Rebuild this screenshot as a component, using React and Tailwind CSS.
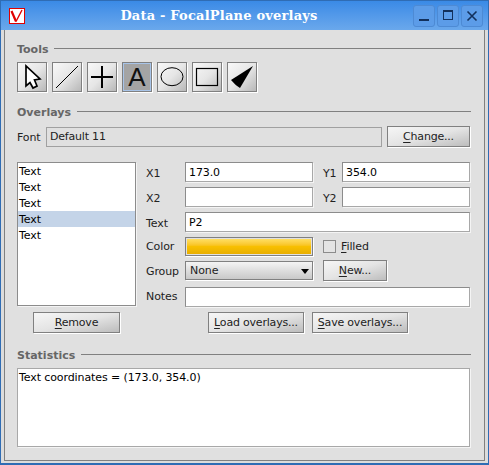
import React from "react";

const font = { fontFamily: '"DejaVu Sans", sans-serif' };

// Group heading with the rule running to the right
function Section({ title }) {
    return (
        <div className="flex items-center h-[14px] pr-[13px]">
            <span className="text-[11px] font-bold text-[#666666] leading-none mr-[6px]">
                {title}
            </span>
            <div className="flex-1 h-[1px] bg-[#808080] -translate-y-[1px]"></div>
        </div>
    );
}

function Button({ className, children }) {
    return (
        <div
            className={`flex items-center justify-center pt-[2px] border border-[#808080] bg-linear-to-br from-[#f6f6f6] via-[#e4e4e4] to-[#bdbdbd] shadow-[1px_1px_0_#ffffff] text-[11px] tracking-[-0.2px] text-[#222222] ${className}`}
        >
            {children}
        </div>
    );
}

function Field({ className, value }) {
    return (
        <div
            className={`flex items-center h-[20px] pl-[3px] pt-[2px] bg-white border border-[#8c8c8c] border-b-[#a8a8a8] border-r-[#a8a8a8] shadow-[1px_1px_0_#f4f4f4] text-[11px] tracking-[-0.1px] text-black ${className}`}
        >
            {value}
        </div>
    );
}

function Label({ className, children }) {
    return (
        <span
            className={`text-[11px] tracking-[-0.1px] text-[#222222] leading-none ${className}`}
        >
            {children}
        </span>
    );
}

function Tool({ active, children }) {
    return (
        <div
            className={`flex items-center justify-center w-[30px] h-[30px] border border-[#808080] shadow-[1px_1px_0_#ffffff] ${
                active
                    ? "bg-[#a4a4a4] outline outline-1 -outline-offset-2 outline-[#a8c4e8]"
                    : "bg-linear-to-br from-[#f8f8f8] via-[#e6e6e6] to-[#b8b8b8]"
            }`}
        >
            {children}
        </div>
    );
}

const tools = [
    <svg width="26" height="26" viewBox="0 0 26 26">
        <path
            d="M7 2 L7 22 L11 18.5 L14 24 L18 22 L15.5 16 L21 15 Z"
            fill="white"
            stroke="black"
            strokeWidth="1.7"
        />
    </svg>,
    <svg width="26" height="26" viewBox="0 0 26 26">
        <path d="M2 24 L24 2" stroke="black" strokeWidth="1" />
    </svg>,
    <svg width="26" height="26" viewBox="0 0 26 26">
        <path d="M2 13 H24 M13 2 V24" stroke="black" strokeWidth="2" />
    </svg>,
    <span
        className="text-[26px] leading-none text-[#111111]"
        style={{ fontFamily: '"Liberation Sans", sans-serif' }}
    >
        A
    </span>,
    <svg width="26" height="26" viewBox="0 0 26 26">
        <ellipse cx="13" cy="12.7" rx="11" ry="9" fill="none" stroke="black" />
    </svg>,
    <svg width="26" height="26" viewBox="0 0 26 26">
        <rect x="2.5" y="4.5" width="21" height="17" fill="none" stroke="black" strokeWidth="1.2" />
    </svg>,
    <svg width="26" height="26" viewBox="0 0 26 26">
        <path d="M24 2 L2 16 Q6 21 11 24 Z" fill="black" />
    </svg>,
];

const items = ["Text", "Text", "Text", "Text", "Text"];

export default function App() {
    return (
        <div
            className="w-[489px] h-[465px] flex flex-col overflow-hidden bg-[#2f6cb4] px-[1px] pb-[2px] pt-[1px]"
            style={font}
        >
            {/* Title bar */}
            <div className="flex items-center h-[29px] shrink-0 bg-linear-to-b from-[#3a8ae6] to-[#6aa8ec] pl-[8px] pr-[5px]">
                <div className="flex items-center justify-center w-[16px] h-[16px] bg-white border border-[#e00000]">
                    <svg width="14" height="14" viewBox="0 0 14 14">
                        <path d="M1.5 2 L6 12.5" fill="none" stroke="#e00000" strokeWidth="2.2" />
                        <path d="M6 12.5 L12 1" fill="none" stroke="#e00000" strokeWidth="1.4" />
                    </svg>
                </div>
                <div
                    className="flex-1 text-center text-white font-bold text-[13px] tracking-[0.2px]"
                    style={{ fontFamily: '"DejaVu Serif", serif' }}
                >
                    Data - FocalPlane overlays
                </div>
                <div className="flex gap-[2px]">
                    <div className="flex items-center justify-center w-[22px] h-[22px] rounded-[3px] border border-[#4d8ad4] bg-[#5c9ce8]">
                        <div className="w-[10px] h-[2px] bg-[#12305c] translate-y-[4px]"></div>
                    </div>
                    <div className="flex items-center justify-center w-[22px] h-[22px] rounded-[3px] border border-[#4d8ad4] bg-[#5c9ce8]">
                        <div className="w-[10px] h-[10px] border border-[#12305c] border-t-2 -translate-y-[1px]"></div>
                    </div>
                    <div className="flex items-center justify-center w-[22px] h-[22px] rounded-[3px] border border-[#4d8ad4] bg-[#5c9ce8]">
                        <svg width="12" height="12" viewBox="0 0 12 12">
                            <path
                                d="M1.5 1.5 L10.5 10.5 M10.5 1.5 L1.5 10.5"
                                stroke="#12305c"
                                strokeWidth="1.6"
                            />
                        </svg>
                    </div>
                </div>
            </div>

            {/* Window frame */}
            <div className="flex-1 bg-[#dcdcdc] px-[3px] pb-[2px]">
                <div className="h-full bg-[#e0e0e0] border border-t-0 border-[#808080] pl-[12px] pt-[12px]">
                    <Section title="Tools" />

                    <div className="flex gap-[5px] mt-[6px]">
                        {tools.map((icon, index) => (
                            <Tool key={index} active={index === 3}>
                                {icon}
                            </Tool>
                        ))}
                    </div>

                    <div className="mt-[13px]">
                        <Section title="Overlays" />
                    </div>

                    {/* Font row */}
                    <div className="flex items-center mt-[7px]">
                        <Label className="w-[29px] pt-[2px]">Font</Label>
                        <div className="flex items-center w-[336px] h-[20px] pl-[3px] pt-[2px] border border-[#a0a0a0] text-[11px] tracking-[-0.2px] text-[#222222]">
                            Default 11
                        </div>
                        <Button className="w-[83px] h-[21px] ml-[5px]">
                            <span>
                                <u className="underline-offset-2">C</u>hange...
                            </span>
                        </Button>
                    </div>

                    {/* List and form */}
                    <div className="flex mt-[15px]">
                        <div className="flex flex-col w-[119px] shrink-0">
                            <div className="h-[144px] bg-white border border-[#8c8c8c] shadow-[1px_1px_0_#f4f4f4]">
                                {items.map((item, index) => (
                                    <div
                                        key={index}
                                        className={`flex items-center h-[16px] pl-[1px] pt-[2px] text-[11px] tracking-[-0.1px] text-black ${
                                            index === 3 ? "bg-[#c4d4e8]" : ""
                                        }`}
                                    >
                                        {item}
                                    </div>
                                ))}
                            </div>
                            <Button className="w-[87px] h-[21px] ml-[16px] mt-[6px]">
                                <span>
                                    <u className="underline-offset-2">R</u>emove
                                </span>
                            </Button>
                        </div>

                        <div className="flex flex-col ml-[10px] w-[324px]">
                            <div className="flex items-center">
                                <Label className="w-[39px] pt-[2px]">X1</Label>
                                <Field className="w-[128px]" value="173.0" />
                                <Label className="w-[19px] ml-[10px] pt-[2px]">Y1</Label>
                                <Field className="w-[128px]" value="354.0" />
                            </div>
                            <div className="flex items-center mt-[5px]">
                                <Label className="w-[39px] pt-[2px]">X2</Label>
                                <Field className="w-[128px]" value="" />
                                <Label className="w-[19px] ml-[10px] pt-[2px]">Y2</Label>
                                <Field className="w-[128px]" value="" />
                            </div>
                            <div className="flex items-center mt-[5px]">
                                <Label className="w-[39px] pt-[2px]">Text</Label>
                                <Field className="w-[285px]" value="P2" />
                            </div>
                            <div className="flex items-center mt-[5px]">
                                <Label className="w-[39px]">Color</Label>
                                <div className="w-[128px] h-[19px] border border-[#808080] p-[1px] shadow-[1px_1px_0_#ffffff]">
                                    <div className="h-full bg-linear-to-b from-[#ffdf60] via-[#f8c000] to-[#e8ae00]"></div>
                                </div>
                                <div className="w-[13px] h-[13px] ml-[10px] border border-[#8c8c8c] bg-[#e4e4e4]"></div>
                                <Label className="ml-[5px]">
                                    <u className="underline-offset-2">F</u>illed
                                </Label>
                            </div>
                            <div className="flex items-center mt-[4px]">
                                <Label className="w-[39px] pt-[2px]">Group</Label>
                                <div className="flex items-center justify-between w-[128px] h-[19px] pl-[4px] pr-[3px] pt-[2px] border border-[#808080] bg-linear-to-b from-[#f4f4f4] to-[#c8c8c8] shadow-[1px_1px_0_#ffffff] text-[11px] tracking-[-0.1px] text-[#222222]">
                                    None
                                    <svg width="8" height="5" viewBox="0 0 8 5">
                                        <path d="M0 0 H8 L4 5 Z" fill="black" />
                                    </svg>
                                </div>
                                <Button className="w-[64px] h-[21px] ml-[10px]">
                                    <span>
                                        <u className="underline-offset-2">N</u>ew...
                                    </span>
                                </Button>
                            </div>
                            <div className="flex items-center mt-[6px]">
                                <Label className="w-[39px] pb-[2px]">Notes</Label>
                                <Field className="w-[285px]" value="" />
                            </div>
                            <div className="flex mt-[5px] ml-[62px] gap-[8px]">
                                <Button className="w-[96px] h-[21px]">
                                    <span>
                                        <u className="underline-offset-2">L</u>oad overlays...
                                    </span>
                                </Button>
                                <Button className="w-[96px] h-[21px]">
                                    <span>
                                        <u className="underline-offset-2">S</u>ave overlays...
                                    </span>
                                </Button>
                            </div>
                        </div>
                    </div>

                    <div className="mt-[15px]">
                        <Section title="Statistics" />
                    </div>

                    <div className="w-[453px] h-[79px] mt-[6px] pl-[1px] pt-[1px] bg-white border border-[#a8a8a8] shadow-[1px_1px_0_#f4f4f4] text-[11px] tracking-[-0.1px] text-black">
                        Text coordinates = (173.0, 354.0)
                    </div>
                </div>
            </div>
        </div>
    );
}
